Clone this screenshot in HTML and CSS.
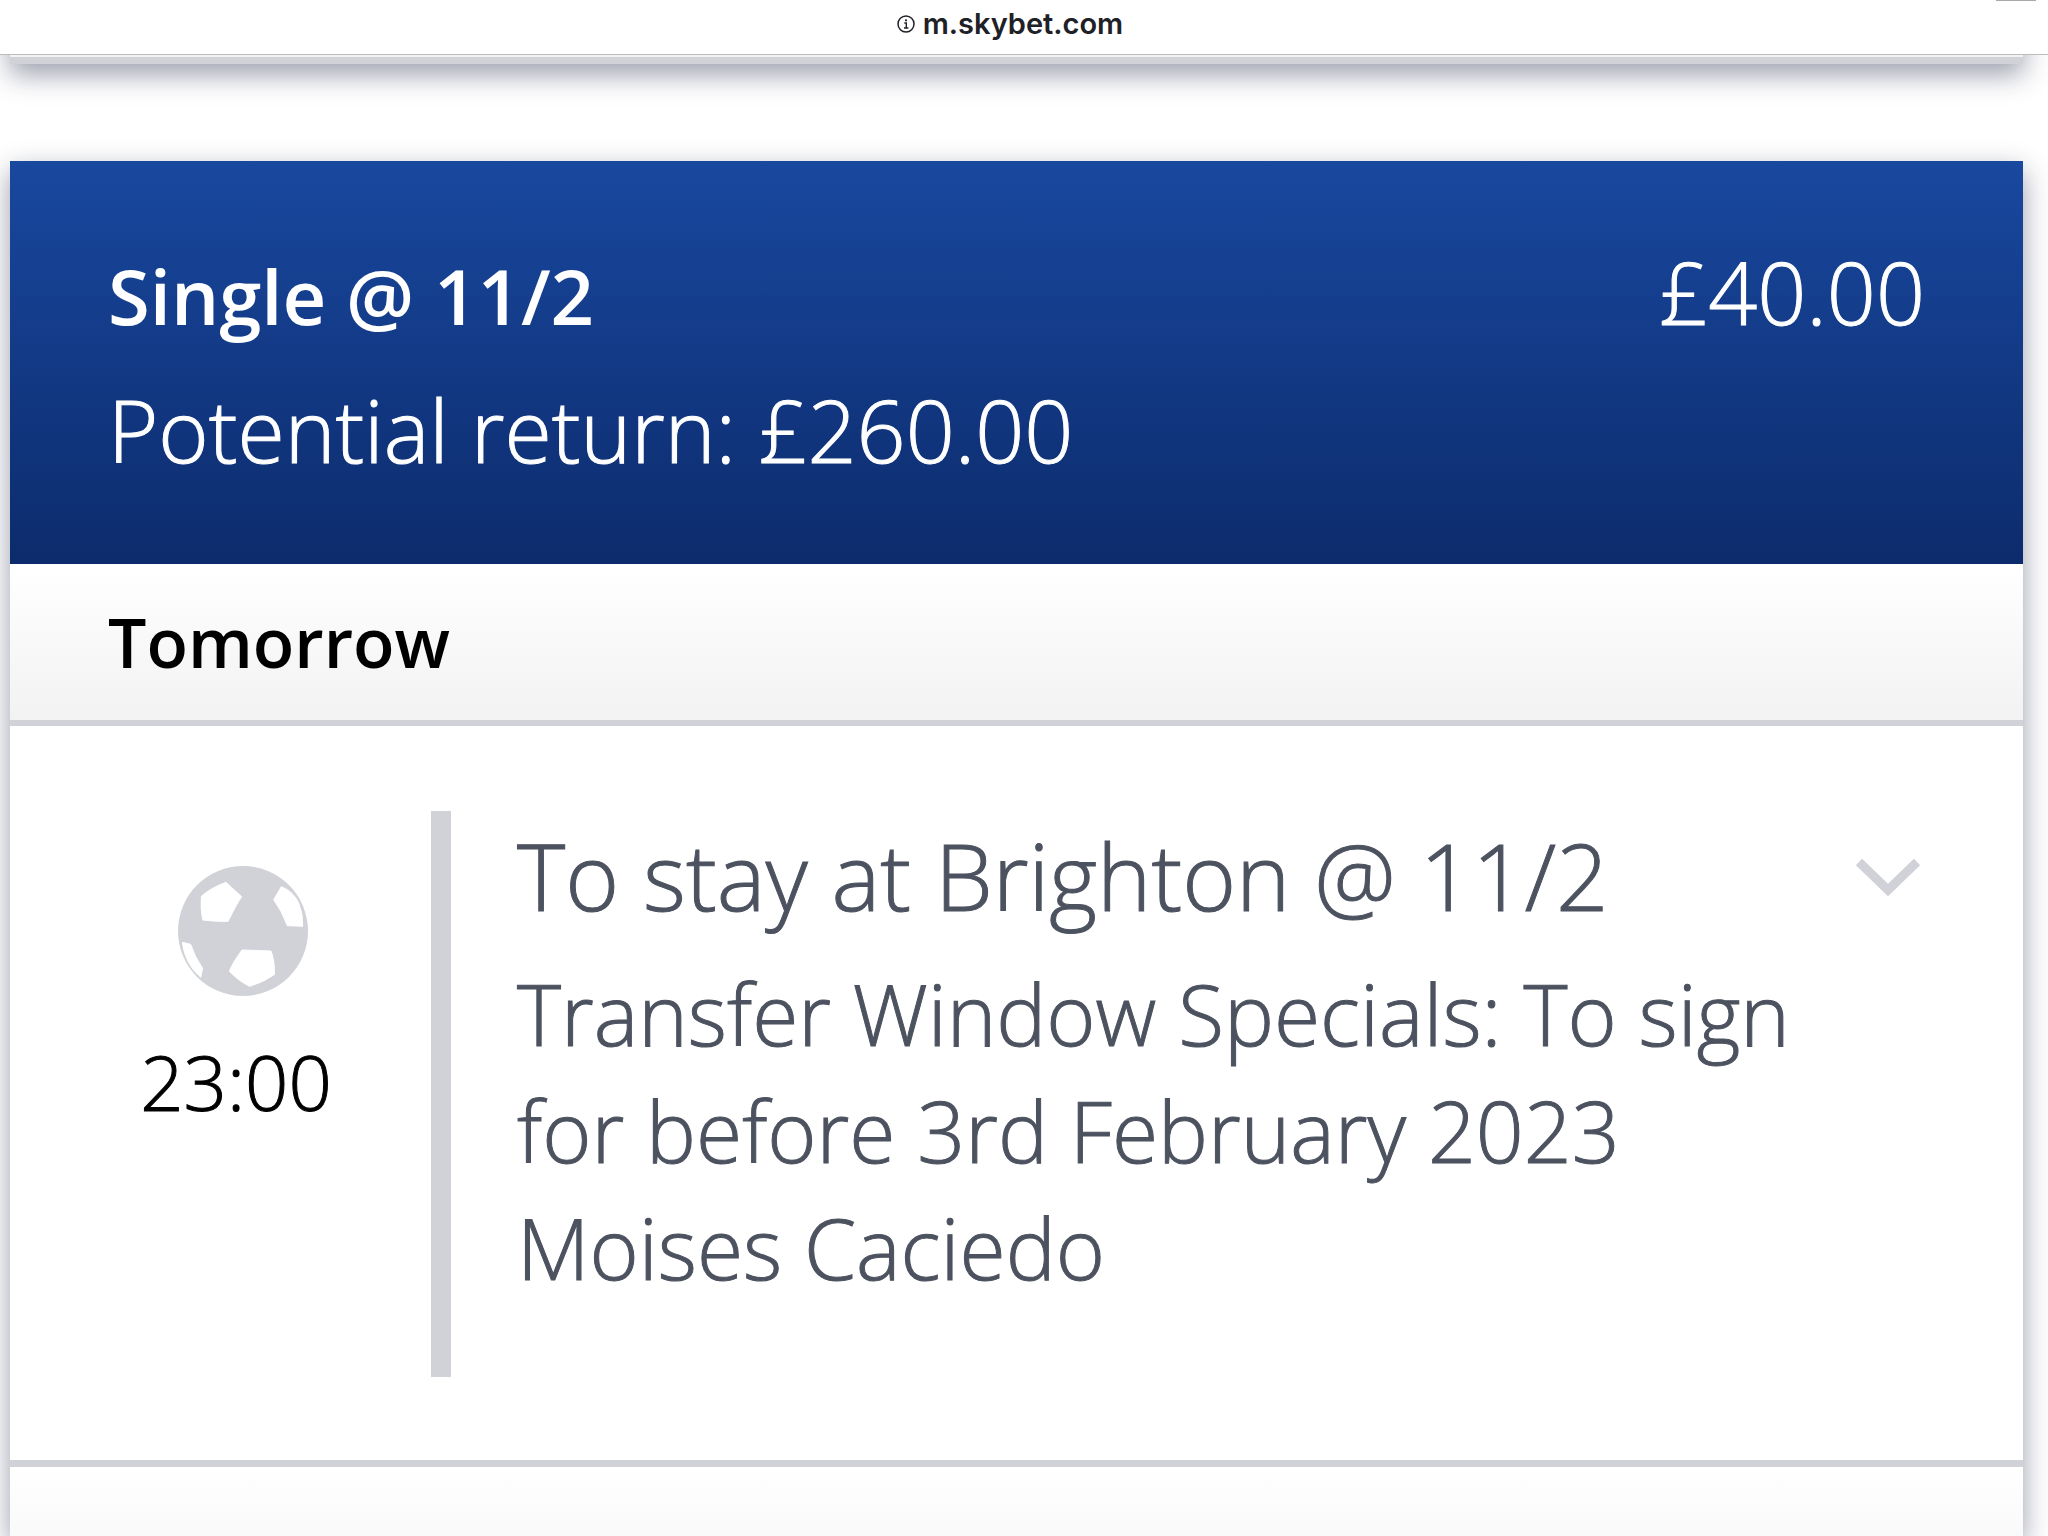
FILE: index.html
```html
<!DOCTYPE html>
<html lang="en">
<head>
<meta charset="utf-8">
<meta name="viewport" content="width=device-width, initial-scale=1">
<title>My Bets</title>
<link rel="stylesheet" href="styles.css">
</head>
<body>
<div class="page">
  <header class="bar">
    <div class="address">
      <svg class="info" viewBox="0 0 18 18" aria-hidden="true">
        <circle cx="9" cy="9" r="8" fill="none" stroke="currentColor" stroke-width="1.5"/>
        <circle cx="9" cy="5.3" r="1.1" fill="currentColor"/>
        <path d="M7.3 8H9.3V13M7 13H11.4" fill="none" stroke="currentColor" stroke-width="1.4"/>
      </svg>
      <span>m.skybet.com</span>
    </div>
    <span class="handle"></span>
  </header>

  <main class="bets">
    <div class="card previous"></div>

    <article class="card bet">
      <header class="summary">
        <div class="line">
          <h1 class="odds">Single @ 11/2</h1>
          <span class="stake">£40.00</span>
        </div>
        <p class="returns">Potential return: £260.00</p>
      </header>
      <h2 class="day">Tomorrow</h2>
      <section class="leg">
        <div class="when">
          <svg class="ball" viewBox="84 76 390 390" aria-hidden="true">
            <circle cx="279" cy="271" r="195" fill="#d1d2d8"/>
            <g fill="#fff" stroke="#fff" stroke-width="3" stroke-linejoin="round">
              <path d="M228 125L275 168Q263 185 234 242Q195 243 158 238Q151 205 154 167Q183 141 228 125Z"/>
              <path d="M394 138Q431 153 446 187Q460 220 458 257L412 255Q395 210 371 177Z"/>
              <path d="M276 328L363 331Q375 362 373 402Q338 426 299 437Q270 424 238 392Q248 366 276 328Z"/>
              <path d="M97 305L122 311Q133 347 158 383L152 410Q105 370 97 305Z"/>
            </g>
          </svg>
          <time class="time">23:00</time>
        </div>
        <div class="details">
          <h3 class="pick">To stay at Brighton @ 11/2</h3>
          <p class="market">Transfer Window Specials: To sign for before 3rd February 2023</p>
          <p class="market">Moises Caciedo</p>
        </div>
        <button class="toggle" type="button" aria-label="Show details">
          <svg class="chevron" viewBox="0 0 66 40" aria-hidden="true">
            <path d="M4 5L33 33L62 5" fill="none" stroke="#d1d2d8" stroke-width="9"/>
          </svg>
        </button>
      </section>
      <div class="footer"></div>
    </article>
  </main>
</div>
</body>
</html>
```
FILE: styles.css
```css
* { box-sizing: border-box; }
body, h1, h2, h3, p { margin: 0; }
body {
  background: #fff;
  color: #000;
  font-family: "Open Sans", "Noto Sans", sans-serif;
}
.page {
  display: flex;
  flex-direction: column;
  min-height: 100vh;
}
.bar {
  display: grid;
  grid-template-columns: 1fr auto 1fr;
  height: 55px;
  padding: 0 12px;
  border-bottom: 1px solid #bdbdbf;
  background: #fff;
}
.address {
  grid-column: 2;
  display: flex;
  align-items: center;
  gap: 8px;
  padding: 0 28px 6px 0;
  color: #202127;
  font-family: Inter, sans-serif;
  font-size: 29px;
  font-weight: 600;
  line-height: 40px;
}
.info { width: 18px; height: 18px; }
.handle {
  grid-column: 3;
  justify-self: end;
  width: 40px;
  height: 1px;
  background: #a8a8aa;
}
.bets {
  flex: 1;
  display: flex;
  flex-direction: column;
  gap: 97px;
  padding: 0 25px 0 10px;
  overflow: hidden;
}
.card { box-shadow: 0 10px 26px rgba(24, 32, 64, 0.44); }
/* only the bottom edge of the bet above shows under the bar */
.previous {
  height: 160px;
  margin-top: -151px;
  border-bottom: 7px solid #d1d2d8;
  background: #f2f2f3;
}
.bet {
  flex: 1;
  display: flex;
  flex-direction: column;
  background: #fff;
}
.summary {
  height: 403px;
  padding: 73px 98px 0;
  background: linear-gradient(#19489f, #0c2b6c);
  color: #fff;
  font-size: 86px;
  line-height: 116px;
}
.line {
  display: flex;
  justify-content: space-between;
  align-items: baseline;
  margin-bottom: 18px;
}
.odds { font-size: 76px; font-weight: 600; }
/* the light weight alone is too thin for these labels */
.stake, .returns, .time, .details { -webkit-text-stroke: 1px currentColor; }
.stake, .returns { font-weight: 300; }
.day {
  padding: 30px 98px;
  border-bottom: 6px solid #d1d2d8;
  background: linear-gradient(#fff, #f2f2f2);
  font-size: 68px;
  font-weight: 600;
  line-height: 96px;
}
.leg {
  display: flex;
  padding: 85px 102px 83px 98px;
  border-bottom: 7px solid #d1d2d8;
}
.when {
  display: flex;
  flex-direction: column;
  align-items: center;
  gap: 38px;
  width: 270px;
  padding-top: 55px;
}
.ball { width: 130px; height: 130px; }
.time {
  margin-right: 14px;
  font-size: 76px;
  font-weight: 300;
  line-height: 96px;
}
.details {
  flex: 1;
  min-height: 566px;
  margin-left: 53px;
  padding-left: 66px;
  border-left: 20px solid #d1d2d8;
  color: #4c525f;
  font-weight: 300;
}
.pick {
  margin-bottom: 14px;
  font-size: 92px;
  font-weight: 300;
  line-height: 130px;
}
.market {
  font-size: 84px;
  line-height: 117px;
}
.toggle {
  align-self: flex-start;
  display: flex;
  margin-top: 46px;
  padding: 0;
  border: 0;
  background: none;
}
.chevron { width: 66px; height: 40px; }
.footer {
  flex: 1;
  background: linear-gradient(#fff, #f2f2f2) 0 0 / 100% 156px;
}
```
